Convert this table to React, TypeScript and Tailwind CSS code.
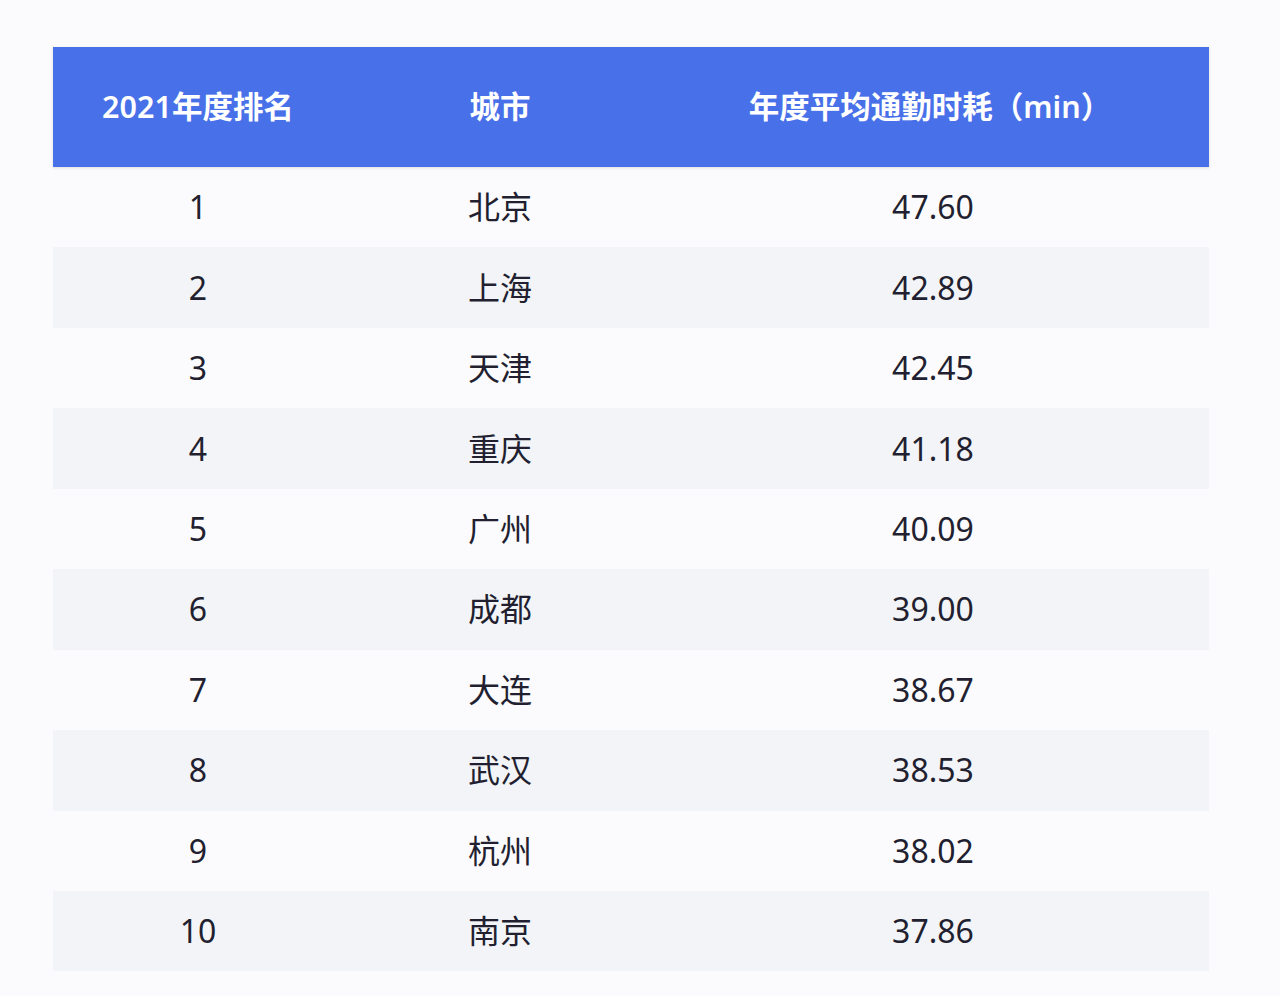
const rows = [
  { rank: '1', city: '北京', time: '47.60' },
  { rank: '2', city: '上海', time: '42.89' },
  { rank: '3', city: '天津', time: '42.45' },
  { rank: '4', city: '重庆', time: '41.18' },
  { rank: '5', city: '广州', time: '40.09' },
  { rank: '6', city: '成都', time: '39.00' },
  { rank: '7', city: '大连', time: '38.67' },
  { rank: '8', city: '武汉', time: '38.53' },
  { rank: '9', city: '杭州', time: '38.02' },
  { rank: '10', city: '南京', time: '37.86' },
];

function App() {
  return (
    <div
      className="min-h-[996px] w-[1280px] bg-[#fbfbfd] pt-[47px] px-[53px]"
      style={{ fontFamily: '"Noto Sans", "Noto Sans CJK SC", sans-serif' }}
    >
      <div className="w-[1156px]">
        <div className="grid grid-cols-[290px_314px_1fr] h-[120px] items-center bg-[#4870e9] text-white text-[30.5px] font-semibold shadow-[0_1px_3px_rgba(0,0,0,0.12)]">
          <div className="text-center">2021年度排名</div>
          <div className="text-center">城市</div>
          <div className="text-center pr-[6px]">年度平均通勤时耗（min）</div>
        </div>
        {rows.map((r, i) => (
          <div
            key={r.rank}
            className={`grid grid-cols-[290px_314px_1fr] h-[80.45px] items-center text-[32px] text-[#221f30] ${
              i % 2 === 1 ? 'bg-[#f3f4f7]' : ''
            }`}
          >
            <div className="text-center">{r.rank}</div>
            <div className="text-center">{r.city}</div>
            <div className="text-center">{r.time}</div>
          </div>
        ))}
      </div>
    </div>
  );
}

export default App;
